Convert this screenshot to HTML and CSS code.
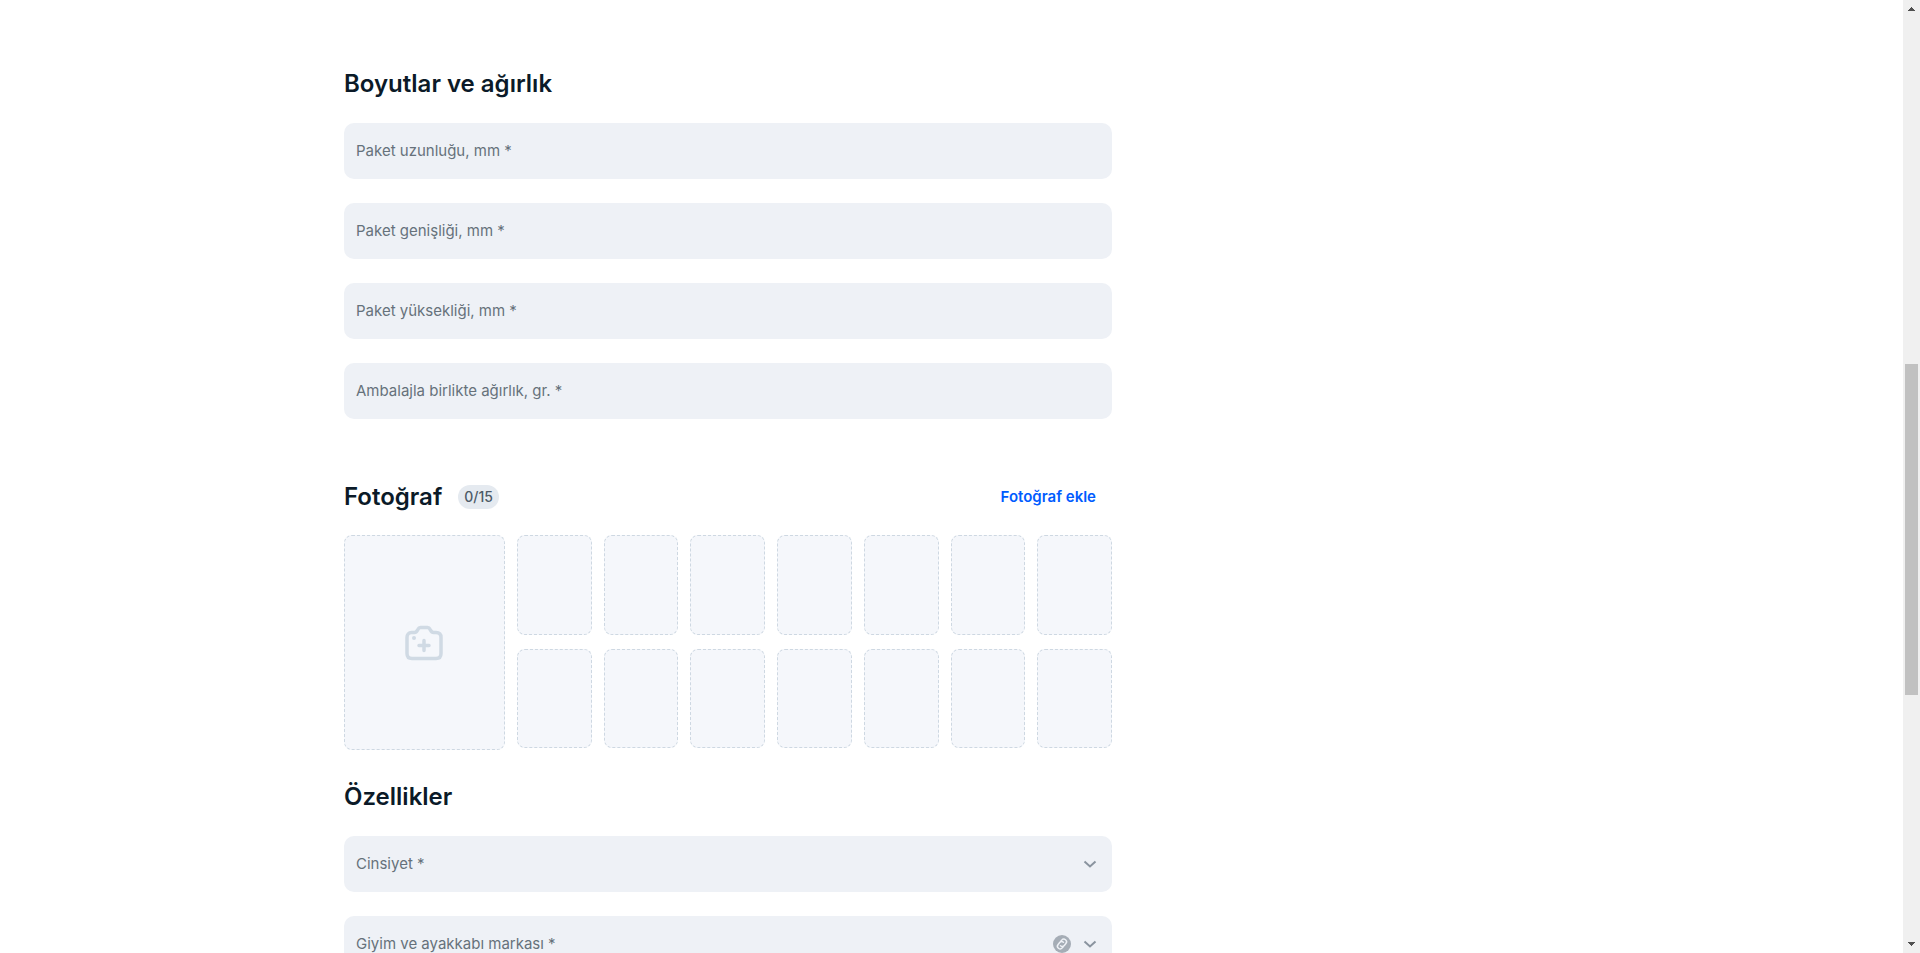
FILE: index.html
```html
<!DOCTYPE html>
<html lang="tr">
<head>
<meta charset="utf-8">
<title>Boyutlar ve ağırlık</title>
<link rel="stylesheet" href="styles.css">
</head>
<body>
<div class="viewport">
  <main class="page">
    <form class="form">
      <section class="section">
        <h2 class="title">Boyutlar ve ağırlık</h2>
        <div class="fields">
          <label class="field"><span class="field-label">Paket uzunluğu, mm *</span><input class="control" type="text"></label>
          <label class="field"><span class="field-label">Paket genişliği, mm *</span><input class="control" type="text"></label>
          <label class="field"><span class="field-label">Paket yüksekliği, mm *</span><input class="control" type="text"></label>
          <label class="field"><span class="field-label">Ambalajla birlikte ağırlık, gr. *</span><input class="control" type="text"></label>
        </div>
      </section>

      <section class="section section-photos">
        <div class="heading">
          <h2 class="title">Fotoğraf</h2>
          <span class="badge">0/15</span>
          <button class="add" type="button">Fotoğraf ekle</button>
        </div>
        <div class="photos">
          <button class="slot slot-main" type="button" aria-label="Fotoğraf ekle">
            <svg class="camera" viewBox="0 0 41 40" aria-hidden="true">
              <path d="M7.500 9.500H10.500C12.500 9.500 13 8 13.800 6.600C14.500 5.200 15 4.500 16.500 4.500H23.500C25 4.500 25.500 5.200 26.200 6.600C27 8 27.500 9.500 29.500 9.500H32C35.200 9.500 37 11.500 37 14.500V30.500C37 34 35.500 35.500 32 35.500H8C4.500 35.500 3 34 3 30.500V14.500C3 11.500 4.800 9.500 7.500 9.500ZM20 17.500V27.500M15 22.500H25"/>
              <circle cx="10" cy="15" r="2"/>
            </svg>
          </button>
          <div class="slots">
            <div class="slot"></div><div class="slot"></div><div class="slot"></div><div class="slot"></div><div class="slot"></div><div class="slot"></div><div class="slot"></div>
            <div class="slot"></div><div class="slot"></div><div class="slot"></div><div class="slot"></div><div class="slot"></div><div class="slot"></div><div class="slot"></div>
          </div>
        </div>
      </section>

      <section class="section">
        <h2 class="title">Özellikler</h2>
        <div class="fields">
          <div class="field">
            <label class="field-label" for="gender">Cinsiyet *</label>
            <select class="control" id="gender"><option></option></select>
            <svg class="chevron" viewBox="0 0 16 16" aria-hidden="true"><path d="M2.500 5.500L8 10.500L13.500 5.500"/></svg>
          </div>
          <div class="field">
            <label class="field-label" for="brand">Giyim ve ayakkabı markası *</label>
            <select class="control" id="brand"><option></option></select>
            <svg class="link" viewBox="0 0 18 18" aria-hidden="true">
              <circle cx="9" cy="9" r="9"/>
              <path transform="rotate(-50 9 9)" d="M8 11.700H6.200A2.700 2.700 0 0 1 6.200 6.300H8.600A2.700 2.700 0 0 1 11.300 9M10 6.300H11.800A2.700 2.700 0 0 1 11.800 11.700H9.400A2.700 2.700 0 0 1 6.700 9"/>
            </svg>
            <svg class="chevron" viewBox="0 0 16 16" aria-hidden="true"><path d="M2.500 5.500L8 10.500L13.500 5.500"/></svg>
          </div>
        </div>
      </section>
    </form>
  </main>
  <div class="scrollbar" aria-hidden="true">
    <svg class="arrow" viewBox="0 0 7 4" shape-rendering="crispEdges"><path d="M3 0H4V1H5V2H6V3H7V4H0V3H1V2H2V1H3Z"/></svg>
    <div class="track"><div class="thumb"></div></div>
    <svg class="arrow" viewBox="0 0 7 4" shape-rendering="crispEdges"><path d="M0 0H7V1H6V2H5V3H4V4H3V3H2V2H1V1H0Z"/></svg>
  </div>
</div>
</body>
</html>
```
FILE: styles.css
```css
*, *::before, *::after { box-sizing: border-box; }

body {
  margin: 0;
  background: #fff;
  color: #001a34;
  font-family: Inter, "Liberation Sans", sans-serif;
}

.viewport {
  display: flex;
  height: 100vh;
  overflow: hidden;
}

.page {
  flex: 1;
  min-width: 0;
  overflow: hidden;
}

.form {
  max-width: 1215px;
  margin: 0 auto;
  padding: 68px 447px 32px 0;
}

.section { margin-bottom: 62px; }
.section-photos { margin-bottom: 31px; }

.title {
  margin: 0;
  color: #0b1a28;
  font-size: 24px;
  font-weight: 600;
  line-height: 32px;
}

.fields {
  display: flex;
  flex-direction: column;
  gap: 24px;
  margin-top: 23px;
}

.field {
  display: flex;
  align-items: center;
  gap: 11px;
  height: 56px;
  padding: 0 14px 0 12px;
  border-radius: 10px;
  background: #eef1f6;
}

.field-label {
  color: #66717b;
  font-size: 15px;
  line-height: 20px;
}

.control {
  flex: 1;
  min-width: 0;
  height: 32px;
  padding: 0;
  border: 0;
  outline: 0;
  background: transparent;
  font: inherit;
  appearance: none;
}

.chevron {
  width: 16px;
  height: 16px;
  fill: none;
  stroke: #8a949f;
  stroke-width: 2;
}

.link {
  width: 18px;
  height: 18px;
  fill: #a5adb6;
}

.link path {
  fill: none;
  stroke: #eef1f6;
  stroke-width: 1.5;
  stroke-linecap: round;
}

.heading {
  display: flex;
  align-items: center;
}

.badge {
  margin-left: 16px;
  padding: 0 6px;
  border-radius: 12px;
  background: #e5eaf0;
  color: #4d5a67;
  font-size: 14px;
  font-weight: 500;
  line-height: 24px;
}

.add {
  margin-left: auto;
  padding: 0 16px;
  border: 0;
  background: transparent;
  color: #005bff;
  font-family: inherit;
  font-size: 15px;
  font-weight: 600;
  line-height: 32px;
}

.photos {
  display: flex;
  align-items: flex-start;
  gap: 12px;
  margin-top: 22px;
}

.slots {
  display: grid;
  flex: 1;
  grid-template-columns: repeat(7, 1fr);
  grid-template-rows: 100px 99px;
  gap: 14px 12px;
}

.slot {
  border: 1px dashed #ced8e2;
  border-radius: 8px;
  background: #f5f7fb;
}

.slot-main {
  display: flex;
  align-items: center;
  justify-content: center;
  width: 161px;
  height: 215px;
  padding: 0;
}

.camera {
  width: 41px;
  height: 40px;
  fill: none;
  stroke: #d0dae4;
  stroke-width: 3.5;
  stroke-linecap: round;
}

.camera circle {
  fill: #d0dae4;
  stroke: none;
}

.scrollbar {
  display: flex;
  flex-direction: column;
  align-items: center;
  width: 17px;
  padding: 7px 0;
  background: #f0f0f0;
}

.arrow {
  width: 7px;
  height: 4px;
  fill: #505050;
}

.track {
  flex: 1;
  width: 13px;
  padding-top: 353px;
}

.thumb {
  height: 331px;
  background: #c1c1c1;
}
```
